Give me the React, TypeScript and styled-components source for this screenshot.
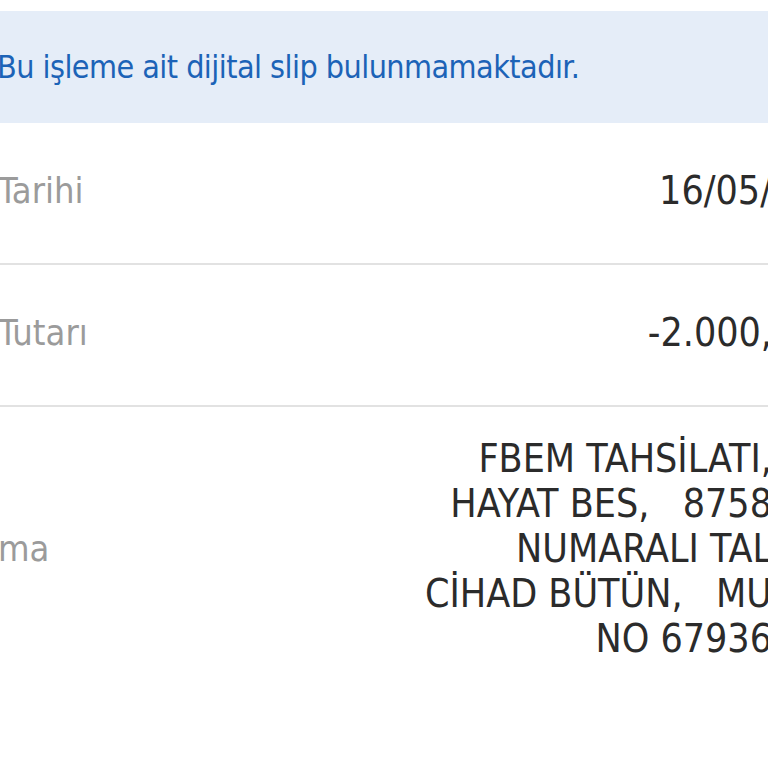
import React from "react";
import styled, { createGlobalStyle } from "styled-components";

const Global = createGlobalStyle`
  html, body {
    margin: 0;
    padding: 0;
    background: #ffffff;
    overflow: hidden;
  }
  body {
    font-family: "DejaVu Sans Condensed", "Liberation Sans Narrow", "Liberation Sans", sans-serif;
  }
`;

const Page = styled.div`
  width: 768px;
  height: 768px;
  padding-top: 11px;
  box-sizing: border-box;
  overflow: hidden;
`;

const Banner = styled.div`
  height: 112px;
  background: #e5edf8;
  display: flex;
  align-items: center;
`;

const BannerText = styled.span`
  margin-left: -3px;
  color: #1c63b7;
  font-size: 32px;
  letter-spacing: -0.55px;
  white-space: nowrap;
`;

const Row = styled.div<{ $last?: boolean }>`
  display: flex;
  align-items: center;
  justify-content: space-between;
  min-height: 142px;
  padding: 29px 0 35px;
  box-sizing: border-box;
  border-bottom: 2px solid ${(p) => (p.$last ? "transparent" : "#e2e2e2")};
`;

const Label = styled.span`
  color: #9b9b9b;
  font-size: 36px;
  margin-left: -2px;
  white-space: nowrap;
`;

const Value = styled.div`
  display: flex;
  flex-direction: column;
  align-items: flex-end;
  margin-right: -4px;
  color: #2b2b2b;
  font-size: 39px;
  line-height: 45px;
`;

const Line = styled.span`
  white-space: pre;
`;

export default function App() {
  return (
    <>
      <Global />
      <Page>
        <Banner>
          <BannerText>Bu işleme ait dijital slip bulunmamaktadır.</BannerText>
        </Banner>
        <Row>
          <Label>Tarihi</Label>
          <Value>
            <Line>16/05/</Line>
          </Value>
        </Row>
        <Row>
          <Label>Tutarı</Label>
          <Value>
            <Line>-2.000,</Line>
          </Value>
        </Row>
        <Row $last>
          <Label>ma</Label>
          <Value>
            <Line>FBEM TAHSİLATI,</Line>
            <Line>HAYAT BES,   8758</Line>
            <Line>NUMARALI TAL</Line>
            <Line>CİHAD BÜTÜN,   MU</Line>
            <Line>NO 67936</Line>
          </Value>
        </Row>
      </Page>
    </>
  );
}
